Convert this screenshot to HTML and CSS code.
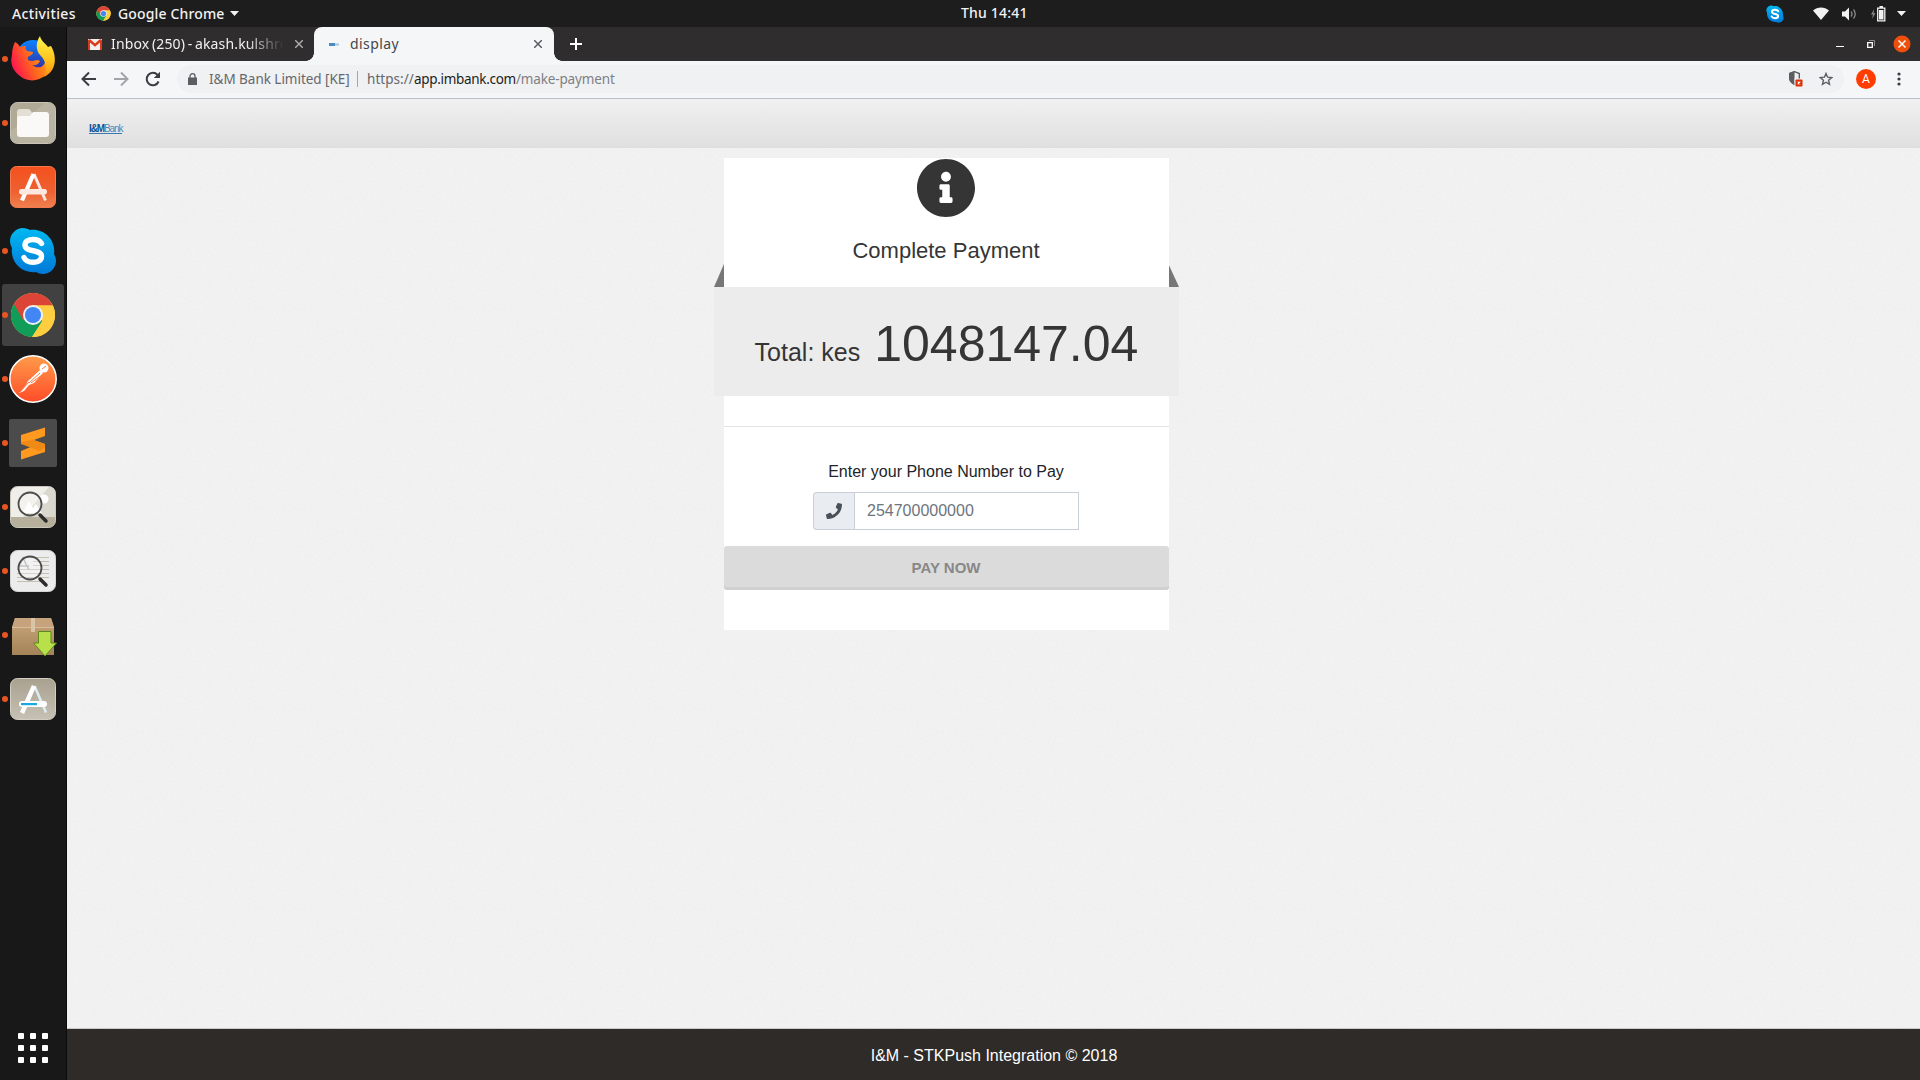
FILE: index.html
```html
<!DOCTYPE html>
<html lang="en">
<head>
<meta charset="utf-8">
<title>display</title>
<link rel="stylesheet" href="styles.css">
</head>
<body>
<svg class="defs" width="0" height="0" aria-hidden="true">
  <defs>
    <linearGradient id="skype" x1="0" y1="0" x2="0" y2="1"><stop offset="0" stop-color="#00b9f2"/><stop offset="1" stop-color="#0078d7"/></linearGradient>
    <linearGradient id="fox" x1="0" y1="0.6" x2="1" y2="0.2"><stop offset="0" stop-color="#ff1450"/><stop offset=".45" stop-color="#ff6a1c"/><stop offset="1" stop-color="#ffc21a"/></linearGradient>
    <linearGradient id="flame" x1="0" y1="0" x2="0" y2="1"><stop offset="0" stop-color="#fff44f"/><stop offset=".6" stop-color="#ffc21a"/><stop offset="1" stop-color="#ff8a16"/></linearGradient>
    <linearGradient id="globe" x1="0" y1="0" x2="0" y2="1"><stop offset="0" stop-color="#0a84ff"/><stop offset="1" stop-color="#3a1f8f"/></linearGradient>
    <linearGradient id="orange" x1="0" y1="0" x2="0" y2="1"><stop offset="0" stop-color="#f4511e"/><stop offset=".6" stop-color="#ee6030"/><stop offset="1" stop-color="#f08050"/></linearGradient>
    <linearGradient id="post" x1="0" y1="0" x2="0" y2="1"><stop offset="0" stop-color="#ff9b4a"/><stop offset="1" stop-color="#ff4c29"/></linearGradient>
    <linearGradient id="box" x1="0" y1="0" x2="0" y2="1"><stop offset="0" stop-color="#c9a67c"/><stop offset="1" stop-color="#a58358"/></linearGradient>
    <linearGradient id="taupe" x1="0" y1="0" x2="0" y2="1"><stop offset="0" stop-color="#a9a190"/><stop offset="1" stop-color="#c6c1b4"/></linearGradient>
    <symbol id="chrome" viewBox="0 0 48 48">
      <circle cx="24" cy="24" r="23" fill="#ffcd40"/>
      <path d="M24 24L4.080 12.500A23 23 0 0 0 23 47L34 30Z" fill="#0f9d58"/>
      <path d="M4.080 12.500A23 23 0 0 1 44.700 14H24L14 30Z" fill="#db4437"/>
      <path d="M24 24L34 30L23 47A23 23 0 0 0 44.700 14H24Z" fill="#ffcd40"/>
      <circle cx="24" cy="24" r="10.500" fill="#f1f1f1"/>
      <circle cx="24" cy="24" r="8.400" fill="#4285f4"/>
    </symbol>
    <symbol id="skype-logo" viewBox="0 0 48 48">
      <g fill="url(#skype)"><path d="M14 1C7 1 1 7 1 14c0 3 1 5 2 7-2 14 10 26 24 24 2 1 4 2 7 2 7 0 13-6 13-13 0-3-1-5-2-7C47 13 35 1 21 3 19 2 17 1 14 1Z"/></g>
      <path d="M32.500 16.500c-2-3.500-5-4-8.500-4-4.500 0-8 1.800-8 5.500 0 8 16.500 3.500 16.500 11.500 0 4-4 5.800-8.500 5.800-4 0-7.500-1.300-9-4.800" fill="none" stroke="#fff" stroke-width="5.400" stroke-linecap="round"/>
    </symbol>
  </defs>
</svg>

<header class="topbar">
  <span class="activities">Activities</span>
  <svg class="app-icon" width="15" height="15"><use href="#chrome"/></svg>
  <span class="app-name">Google Chrome</span>
  <svg class="caret" width="9" height="5" viewBox="0 0 9 5"><path d="M0 0H9L4.500 5Z"/></svg>
  <span class="clock">Thu 14:41</span>
  <div class="tray">
    <svg width="18" height="18"><use href="#skype-logo"/></svg>
    <svg class="t-wifi" width="16" height="13" viewBox="0 0 16 13"><path d="M0 3.500C4.500-.6 11.500-.6 16 3.500L8 13Z" fill="#f2f2f2"/></svg>
    <svg class="t-vol" width="15" height="14" viewBox="0 0 15 14"><path d="M0 4.500H3L7 .5V13.500L3 9.500H0Z" fill="#f2f2f2"/><path d="M9 4.500q2 2.500 0 5M11.500 2.500q3.500 4.500 0 9" fill="none" stroke="#8a8a8a" stroke-width="1.300"/></svg>
    <svg class="t-bat" width="15" height="16" viewBox="0 0 15 16"><path d="M3.200 3L0 8.500H2L1 13 4.500 7.200H2.500Z" fill="#8a8a8a"/><path d="M6.700 2.200H13.800V14.800H6.700Z" fill="none" stroke="#f2f2f2" stroke-width="1.300"/><path d="M8.500 0H12V2H8.500ZM8 4H12.500V13.500H8Z" fill="#f2f2f2"/></svg>
    <svg class="caret" width="9" height="5" viewBox="0 0 9 5"><path d="M0 0H9L4.500 5Z"/></svg>
  </div>
</header>

<div class="desktop">
  <nav class="dock">
    <div class="dock-item running">
      <svg width="48" height="48" viewBox="0 0 48 48"><circle cx="24" cy="22" r="17" fill="url(#globe)"/><path d="M6 7c2 1 3 2 5 5 2-1 4-1 6-1-1 2 0 4 1 5l6 1c0 3-4 4-5 5-1 3 1 4 4 4 3 0 5-2 8 0-2 4-5 5-8 4 8 6 16 0 13-11l5-8c6 12 4 22-4 29-8 7-19 7-26 1C3 35 1 28 3 20c0-5 1-9 3-13Z" fill="url(#fox)"/><path d="M31 1c1 5 5 7 8 11l3-1c6 10 6 25-7 31 3-9 2-16-3-21-6-6-5-14-1-20Z" fill="url(#flame)"/></svg>
    </div>
    <div class="dock-item running">
      <svg width="48" height="48" viewBox="0 0 48 48"><rect x="1.500" y="3.500" width="45" height="41" rx="7" fill="#afa996" stroke="#c9c4b6"/><path d="M36 4h4q6 0 6 6v28q0 6-6 6H8q-6 0-6-6v-6Z" fill="#b9b3a1"/><path d="M8 13q0-3 3-3h8q2 0 3 2l1 2h14v8H8Z" fill="#e3dfd5"/><path d="M8 19q0-2 2-2h11l3-4h13q3 0 3 3v19q0 3-3 3H11q-3 0-3-3Z" fill="#faf9f7"/></svg>
    </div>
    <div class="dock-item">
      <svg width="48" height="48" viewBox="0 0 48 48"><rect x="1.500" y="3.500" width="45" height="41" rx="6" fill="url(#orange)" stroke="#f5794e"/><path d="M25 11L36.500 37.500" fill="none" stroke="#fbe8e0" stroke-width="3"/><path d="M24.500 11L13 37.500" fill="none" stroke="#fff" stroke-width="4.200"/><rect x="10" y="26" width="28" height="5.500" rx="2.700" fill="#fbe8e0"/></svg>
    </div>
    <div class="dock-item running"><svg width="48" height="48"><use href="#skype-logo"/></svg></div>
    <div class="dock-item running active"><svg width="46" height="46"><use href="#chrome"/></svg></div>
    <div class="dock-item running">
      <svg width="48" height="48" viewBox="0 0 48 48"><circle cx="24" cy="24" r="23.200" fill="url(#post)" stroke="#fff" stroke-width="1.500"/><circle cx="35" cy="13" r="4.500" fill="#fff"/><path d="M31 15L19 26l-2 4-7 8 5-2 5-6 5-2 9-10Z" fill="#fff"/><path d="M31 18L20 28M33 20L22 28M11 37L20 27" stroke="#ff7740" stroke-width="1"/><path d="M33 14L37 11" stroke="#ff7740"/></svg>
    </div>
    <div class="dock-item running">
      <svg width="48" height="48" viewBox="0 0 48 48"><rect width="48" height="48" rx="2" fill="#4b4b4b"/><path d="M12 16L36 8.500V17L25 21l11 4V33L12 40.500V32l12-5L12 23Z" fill="#ff9a1f"/><path d="M12 23V25L31 32L36 28V25L24 21Z" fill="#f08a16"/></svg>
    </div>
    <div class="dock-item running">
      <svg width="48" height="48" viewBox="0 0 48 48"><rect x="1.500" y="3.500" width="45" height="41" rx="7" fill="#efeee8" stroke="#c9c7be"/><path d="M14 34L40 4Q46 4 46 10V34Z" fill="#d9d7ce"/><path d="M2 34H46V38q0 6-6 6H8q-6 0-6-6Z" fill="#b5af9c"/><path d="M14 30L20 18l4 7 3-4 6 9Z" fill="#fff"/><circle cx="35" cy="16" r="4.500" fill="#fff"/><circle cx="21" cy="21" r="11.500" fill="#fff" fill-opacity=".25" stroke="#4b4b4b" stroke-width="1.800"/><path d="M31 32L37 38" stroke="#2c2c2c" stroke-width="3.500" stroke-linecap="round"/></svg>
    </div>
    <div class="dock-item running">
      <svg width="48" height="48" viewBox="0 0 48 48"><rect x="1.500" y="3.500" width="45" height="41" rx="7" fill="#ececec" stroke="#d5d5d5"/><path d="M20 10.500H40M24 14.500H40M24 18.500H40M24 22.500H40M8 22.500H24M8 26.500H40M8 30.500H40M8 34.500H32" stroke="#c4c0ae"/><path d="M9 22L14 11l6 12M10 19H20" fill="none" stroke="#aaa" stroke-width="1.500"/><circle cx="21" cy="21" r="11.500" fill="#fff" fill-opacity=".3" stroke="#4b4b4b" stroke-width="1.800"/><path d="M31 32L37 38" stroke="#2c2c2c" stroke-width="3.500" stroke-linecap="round"/></svg>
    </div>
    <div class="dock-item running">
      <svg width="48" height="48" viewBox="0 0 48 48"><path d="M6 7H42L45 17V44H3V17Z" fill="url(#box)"/><path d="M6 7H42L45 16H3Z" fill="#c6a37c"/><path d="M3 16.500H45" stroke="#d8bd98"/><path d="M22 7H26V21H22Z" fill="#d9c4a6"/><path d="M29.500 20.500H42V32H47.500L36 45 24.500 32H29.500Z" fill="#b7e04a" stroke="#5d8c1a"/></svg>
    </div>
    <div class="dock-item running">
      <svg width="48" height="48" viewBox="0 0 48 48"><rect x="1.500" y="3.500" width="45" height="41" rx="7" fill="url(#taupe)" stroke="#d2cdc1"/><path d="M25.500 11L37 37.500" fill="none" stroke="#dcecf2" stroke-width="2.600"/><path d="M25 11L13 38" stroke="#fff" stroke-width="4.500"/><rect x="10" y="26" width="28" height="6" rx="3" fill="#fff"/><rect x="12" y="28" width="16" height="2.200" fill="#19a8e0"/></svg>
    </div>
    <div class="show-apps"><i></i><i></i><i></i><i></i><i></i><i></i><i></i><i></i><i></i></div>
  </nav>

  <div class="browser">
    <div class="tabstrip">
      <div class="tab tab-idle">
        <svg width="14" height="11" viewBox="0 0 14 11"><path d="M0 0H14V11H0Z" fill="#f3efee"/><path d="M0 11V1.500Q1-.3 2.500.6L7 4.500 11.500.6Q13-.3 14 1.500V11H12V3.500L7 7.800 2 3.500V11Z" fill="#d93a1a"/></svg>
        <span class="tab-title">Inbox (250) - akash.kulshre</span>
        <svg class="x" width="8" height="8" viewBox="0 0 8 8"><path d="M0 0L8 8M8 0L0 8"/></svg>
      </div>
      <div class="tab tab-active">
        <svg width="10" height="4" viewBox="0 0 10 4"><path d="M0 1H6V4H0Z" fill="#4a8cc2"/><path d="M6 1.500H10V3.500H6Z" fill="#a3c4df"/></svg>
        <span class="tab-title">display</span>
        <svg class="x" width="8" height="8" viewBox="0 0 8 8"><path d="M0 0L8 8M8 0L0 8"/></svg>
      </div>
      <svg class="new-tab" width="12" height="12" viewBox="0 0 12 12"><path d="M6 0V12M0 6H12"/></svg>
      <div class="window-buttons">
        <svg width="8" height="12" viewBox="0 0 8 12"><path d="M0 8.500H8" stroke="#fff"/></svg>
        <svg width="9" height="9" viewBox="0 0 9 9"><path d="M.7 2.700H5.300V7.300H.7Z" fill="none" stroke="#fff" stroke-width="1.300"/><path d="M2 .5H7.500V6" fill="none" stroke="#8d8a8b"/></svg>
        <svg width="18" height="18" viewBox="0 0 18 18"><circle cx="9" cy="9" r="8.500" fill="#f04f0b"/><path d="M5.500 5.500L12.500 12.500M12.500 5.500L5.500 12.500" stroke="#fff" stroke-width="1.500"/></svg>
      </div>
    </div>

    <div class="toolbar">
      <svg class="nav" width="16" height="16" viewBox="0 0 16 16"><path d="M15 8H2M8 1.500L1.500 8 8 14.500" stroke="#3c3d40"/></svg>
      <svg class="nav" width="16" height="16" viewBox="0 0 16 16"><path d="M1 8H14M8 1.500L14.500 8 8 14.500" stroke="#a3a4a7"/></svg>
      <svg class="nav" width="16" height="16" viewBox="0 0 16 16"><path d="M13.600 10.500A6.200 6.200 0 1 1 12.600 4" stroke="#3c3d40"/><path d="M15 .8V7H8.800Z" fill="#3c3d40"/></svg>
      <div class="omnibox">
        <svg width="9" height="12" viewBox="0 0 9 12"><path d="M0 4.500H9V12H0Z" fill="#5b5d63"/><path d="M2 5V3.200a2.500 2.500 0 0 1 5 0V5" fill="none" stroke="#5b5d63" stroke-width="1.300"/></svg>
        <span class="identity">I&amp;M Bank Limited [KE]</span>
        <i class="divider"></i>
        <span class="url"><span class="scheme">https://</span><span class="host">app.imbank.com</span><span class="path">/make-payment</span></span>
        <svg class="shield" width="14" height="16" viewBox="0 0 14 16"><path d="M5.500.7L10.300 2.500V6.500Q10.300 11 5.500 13.300.7 11 .7 6.500V2.500Z" fill="none" stroke="#5b5d63" stroke-width="1.400"/><path d="M5.500 0V14Q0 11 0 6.500V2Z" fill="#5b5d63"/><path d="M5.500 7.500H14V16H5.500Z" fill="#f0f1f3"/><rect x="6.500" y="8.500" width="7" height="7" rx="1" fill="#dd2c00"/><path d="M8.700 10.700L11.300 13.300M11.300 10.700L8.700 13.300" stroke="#fff" stroke-width="1.100"/></svg>
        <svg width="14" height="14" viewBox="0 0 14 14"><path d="M7 1.500L8.600 5.200 12.700 5.600 9.600 8.300 10.500 12.300 7 10.200 3.500 12.300 4.400 8.300 1.300 5.600 5.400 5.200Z" fill="none" stroke="#5b5d63" stroke-width="1.400"/></svg>
      </div>
      <span class="avatar">A</span>
      <svg width="4" height="14" viewBox="0 0 4 14"><g fill="#3c3d40"><circle cx="2" cy="2" r="1.600"/><circle cx="2" cy="7" r="1.600"/><circle cx="2" cy="12" r="1.600"/></g></svg>
    </div>

    <div class="page">
      <div class="page-header">
        <div class="logo"><span><b>I&amp;M</b>Bank</span></div>
      </div>
      <main class="page-body">
        <section class="card">
          <div class="card-head">
            <svg width="58" height="58" viewBox="8 8 496 496"><path fill="#353535" d="M256 8C119.043 8 8 119.083 8 256c0 136.997 111.043 248 248 248s248-111.003 248-248C504 119.083 392.957 8 256 8zm0 110c23.196 0 42 18.804 42 42s-18.804 42-42 42-42-18.804-42-42 18.804-42 42-42zm56 254c0 6.627-5.373 12-12 12h-88c-6.627 0-12-5.373-12-12v-24c0-6.627 5.373-12 12-12h12v-64h-12c-6.627 0-12-5.373-12-12v-24c0-6.627 5.373-12 12-12h64c6.627 0 12 5.373 12 12v100h12c6.627 0 12 5.373 12 12v24z"/></svg>
            <h1>Complete Payment</h1>
          </div>
          <div class="ribbon"><span class="label">Total: kes</span><span class="amount">1048147.04</span></div>
          <hr>
          <label for="phone">Enter your Phone Number to Pay</label>
          <div class="field">
            <span class="addon"><svg width="16" height="16" viewBox="0 0 512 512"><path fill="#495057" d="M493.400 24.600l-104-24c-11.300-2.600-22.900 3.300-27.500 13.900l-48 112c-4.200 9.800-1.400 21.300 6.900 28l60.600 49.600c-36 76.700-98.900 140.500-177.200 177.200l-49.600-60.600c-6.800-8.300-18.200-11.100-28-6.900l-112 48C3.900 366.500-2 378.100.6 389.400l24 104C27.100 504.200 36.700 512 48 512c256.100 0 464-207.500 464-464 0-11.200-7.700-20.900-18.600-23.400z"/></svg></span>
            <input id="phone" type="text" placeholder="254700000000">
          </div>
          <button class="pay" type="button">PAY NOW</button>
        </section>
      </main>
      <footer class="page-footer">I&amp;M - STKPush Integration © 2018</footer>
    </div>
  </div>
</div>
</body>
</html>
```
FILE: styles.css
```css
* { box-sizing: border-box; }
html, body { margin: 0; height: 100%; overflow: hidden; }
body { display: flex; flex-direction: column; background: #181818; font-family: "Liberation Sans", Arial, sans-serif; }
svg { display: block; flex: none; }
.defs { position: absolute; }

.topbar { flex: none; height: 27px; display: flex; align-items: center; background: #1d1d1d; color: #f2f2f2; padding: 0 14px 0 12px; position: relative; font: 500 14px/27px "Noto Sans", "Open Sans", sans-serif; }
.activities { width: 84px; letter-spacing: .35px; }
.app-icon { margin-right: 7px; }
.app-name { width: 106px; margin-right: 6px; letter-spacing: .15px; }
.caret { fill: #f2f2f2; }
.activities, .app-name, .clock { white-space: nowrap; padding-bottom: 1px; line-height: 25px; }
.clock { position: absolute; left: 961px; top: 0; letter-spacing: .2px; }
.tray { margin-left: auto; display: flex; align-items: center; }
.t-wifi { margin-left: 29px; }
.t-vol { margin-left: 13px; }
.t-bat { margin-left: 14px; }
.tray .caret { margin-left: 11px; }

.desktop { flex: 1; display: flex; min-height: 0; }
.dock { flex: none; width: 67px; display: flex; flex-direction: column; gap: 2px; padding: 1px 2px 0 2px; background: #181818; border-right: 1px solid #0b0b0b; }
.dock-item { flex: none; position: relative; height: 62px; display: flex; align-items: center; justify-content: center; border-radius: 3px; }
.dock-item.active { background: #414141; }
.dock-item.running::before { content: ""; position: absolute; left: 0; top: 28px; width: 6px; height: 6px; border-radius: 50%; background: #e95420; }
.show-apps { margin: auto auto 17px 16px; display: grid; grid-template-columns: repeat(3, 6px); gap: 6px; }
.show-apps i { height: 6px; border-radius: 1px; background: #fff; }

.browser { flex: 1; min-width: 0; display: flex; flex-direction: column; }
.tabstrip { flex: none; height: 34px; display: flex; align-items: center; background: #302d2e; font: 14px/34px "Noto Sans", "Open Sans", sans-serif; }
.tab { display: flex; align-items: center; height: 34px; }
.tab-idle { width: 247px; padding: 0 11px 0 21px; color: #f1f1f1; }
.tab-title { white-space: nowrap; overflow: hidden; letter-spacing: .15px; }
.tab-idle .tab-title { width: 175px; margin-left: 9px; word-spacing: -1.2px; -webkit-mask-image: linear-gradient(to right, #000 135px, transparent 173px); mask-image: linear-gradient(to right, #000 135px, transparent 173px); }
.x { margin-left: auto; stroke: #5b5d60; stroke-width: 1.5; fill: none; }
.tab-idle .x { stroke: #aaa8a8; }
.tab-active { position: relative; width: 240px; padding: 0 12px 0 15px; background: #f5f6f7; color: #45474a; border-radius: 8px 8px 0 0; }
.tab-active .tab-title { margin-left: 11px; letter-spacing: .4px; }
.tab-active::before, .tab-active::after { content: ""; position: absolute; bottom: 0; width: 8px; height: 8px; }
.tab-active::before { left: -8px; background: radial-gradient(circle at 0 0, transparent 7.5px, #f5f6f7 8px); }
.tab-active::after { right: -8px; background: radial-gradient(circle at 100% 0, transparent 7.5px, #f5f6f7 8px); }
.new-tab { margin-left: 16px; stroke: #fff; stroke-width: 2; }
.window-buttons { margin: 0 9px 0 auto; display: flex; align-items: center; gap: 23px; }
.window-buttons svg:last-child { margin-left: -6px; }

.toolbar { flex: none; height: 38px; display: flex; align-items: center; background: #f5f6f8; border-bottom: 1px solid #bcc0cd; padding: 0 19px 1px 14px; }
.nav { margin-right: 16px; stroke-width: 2; fill: none; }
.omnibox { flex: 1; height: 28px; margin: 0 12px 0 0; padding: 0 11px 0 11px; display: flex; align-items: center; border-radius: 14px; background: #f0f1f3; font: 13.500px/28px "Noto Sans", "Open Sans", sans-serif; color: #65676c; white-space: nowrap; }
.identity { width: 141px; margin-left: 12px; letter-spacing: -.03px; }
.divider { width: 1px; height: 16px; margin: 0 9px 0 7px; background: #a3a5a9; }
.scheme, .host, .path { display: inline-block; }
.scheme { letter-spacing: .05px; }
.host { color: #1c1d20; letter-spacing: -.3px; }
.path { color: #7e8084; letter-spacing: -.15px; }
.shield { margin: 0 16px 0 auto; }
.avatar { width: 20px; height: 20px; margin-right: 21px; border-radius: 50%; background: #ff3d00; color: #fff; font: 12px/20px Roboto, sans-serif; text-align: center; }

.page { flex: 1; min-height: 0; display: flex; flex-direction: column; }
.page-header { flex: none; height: 49px; padding: 24px 0 0 22px; background: linear-gradient(#f1f1f1, #dfdfdf); }
.logo { width: 33px; height: 11px; border-bottom: 1px solid #3b78b0; color: #4f86ba; font: 10px/11px "Liberation Sans", sans-serif; letter-spacing: -1.1px; white-space: nowrap; }
.logo b { color: #0d5296; }
.page-body { flex: 1; padding: 10px 0 0 657px; background-color: #f3f3f3; background-image: url("data:image/svg+xml,%3Csvg xmlns='http://www.w3.org/2000/svg' width='200' height='200'%3E%3Cfilter id='n' x='0' y='0' width='1' height='1'%3E%3CfeTurbulence type='fractalNoise' baseFrequency='.4' numOctaves='2' stitchTiles='stitch'/%3E%3CfeColorMatrix type='saturate' values='0'/%3E%3C/filter%3E%3Crect width='200' height='200' filter='url(%23n)' opacity='.075'/%3E%3C/svg%3E"); }
.card { width: 445px; height: 472px; display: flex; flex-direction: column; align-items: center; background: #fff; color: #212529; }
.card-head { width: 444px; align-self: flex-start; height: 129px; padding-top: 1px; display: flex; flex-direction: column; align-items: center; }
.card-head h1 { margin: 21px 0 0; font-size: 22px; line-height: 26px; font-weight: 400; color: #353535; }
.ribbon { position: relative; width: 465px; height: 109px; display: flex; align-items: baseline; justify-content: center; background: #ececec; color: #353535; line-height: 114px; }
.ribbon::before, .ribbon::after { content: ""; position: absolute; bottom: 100%; width: 10px; height: 23px; background: #777; }
.ribbon::before { left: 0; clip-path: polygon(100% 0, 100% 100%, 0 100%); }
.ribbon::after { right: 0; clip-path: polygon(0 5%, 100% 100%, 0 100%); }
.label { font-size: 25px; margin-right: 14px; }
.amount { font-size: 50px; }
hr { width: 100%; height: 1px; margin: 30px 0 0; border: 0; background: #e4e4e4; }
label { margin: 33px 1px 0 0; font-size: 16px; line-height: 24px; }
.field { display: flex; width: 266px; height: 38px; margin: 8px 1px 0 0; }
.addon { width: 41px; display: flex; align-items: center; justify-content: center; background: #e9ecf0; border: 1px solid #c8cfd8; border-right: 0; border-radius: 4px 0 0 4px; }
input { flex: 1; min-width: 0; padding: 0 12px; border: 1px solid #c8cfd8; border-radius: 0; background: #fff; font: 16px "Liberation Sans", Arial, sans-serif; outline: 0; }
input::placeholder { color: #6c757d; }
.pay { width: 100%; height: 44px; margin-top: 16px; padding: 0 1px 1px 0; border: 0; border-radius: 3px; background: #dbdbdb; box-shadow: inset 0 -3px #d0d0d0; color: #888; font: bold 15px "Liberation Sans", Arial, sans-serif; }
.page-footer { flex: none; height: 52px; padding-left: 1px; border-top: 1px solid #c9cbc8; background: #2f2b28; color: #fff; font-size: 16px; line-height: 53px; text-align: center; }
```
